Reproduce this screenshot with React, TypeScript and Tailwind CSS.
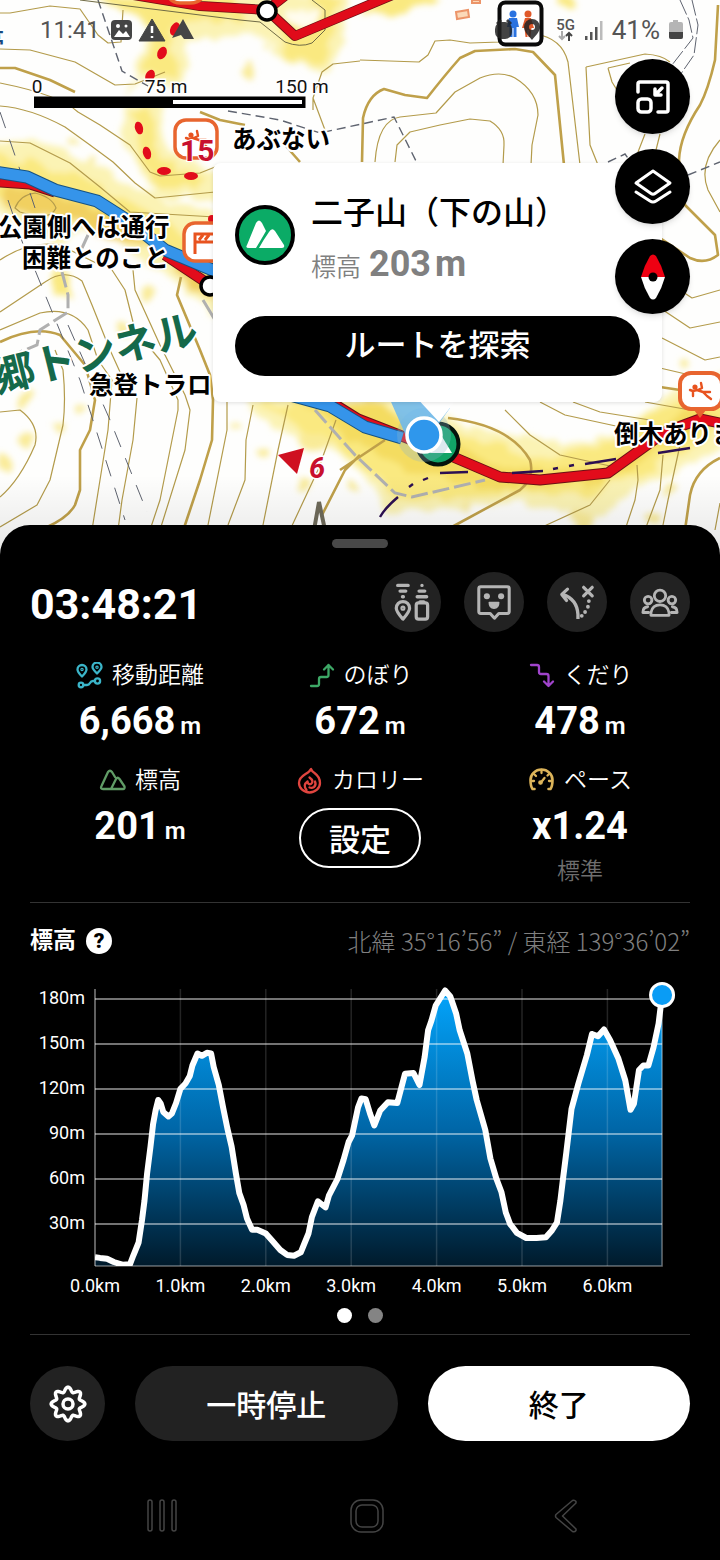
import React from 'react';

type Point = [number, number];

// distance in km, altitude in m
const profile: Point[] = [
  [0, 7.3], [0.06, 6.7], [0.14, 6.2], [0.22, 4], [0.32, 2.2], [0.41, 2.5], [0.45, 8.5], [0.51, 17],
  [0.55, 32], [0.58, 45], [0.61, 63], [0.65, 81], [0.68, 96], [0.71, 105], [0.74, 112], [0.77, 109.5],
  [0.8, 104], [0.86, 101], [0.9, 103], [0.95, 110], [1, 119.5], [1.06, 123], [1.11, 128], [1.14, 135],
  [1.2, 143], [1.25, 141.5], [1.31, 143.5], [1.36, 143], [1.39, 134], [1.45, 122], [1.5, 107], [1.55, 93],
  [1.6, 81], [1.65, 63], [1.69, 50], [1.74, 42], [1.78, 33], [1.84, 25.5], [1.9, 25.5], [2, 23],
  [2.07, 18.5], [2.17, 12], [2.25, 8.7], [2.33, 8.2], [2.41, 10.5], [2.45, 16], [2.5, 23], [2.54, 34],
  [2.61, 44.5], [2.7, 40.5], [2.74, 48.5], [2.84, 59.5], [2.91, 72], [2.97, 84], [3.01, 88.5], [3.08, 107],
  [3.12, 113], [3.17, 112.5], [3.22, 103], [3.27, 95], [3.34, 105], [3.43, 110.5], [3.54, 110], [3.63, 129.5],
  [3.73, 130], [3.8, 122], [3.86, 140.5], [3.9, 158.5], [3.94, 165], [3.99, 175], [4.1, 185], [4.16, 181],
  [4.23, 169.5], [4.27, 158.5], [4.36, 143], [4.42, 125], [4.47, 112], [4.57, 92], [4.63, 73], [4.7, 59.5],
  [4.76, 50.5], [4.81, 37], [4.86, 29.5], [4.94, 23.5], [5.05, 20], [5.17, 20], [5.28, 20.5], [5.35, 25],
  [5.41, 30.5], [5.45, 45], [5.48, 59.5], [5.52, 77.5], [5.58, 106], [5.66, 123], [5.76, 142], [5.82, 156],
  [5.89, 154.5], [5.96, 159], [6.03, 152], [6.13, 139.5], [6.21, 125], [6.27, 105.5], [6.31, 109.5], [6.37, 132],
  [6.42, 135], [6.48, 135], [6.54, 147], [6.6, 163], [6.64, 182],
];

const chartX = (km: number) => 65 + km * 85.4;
const chartY = (m: number) => 291 - m * 1.5;
const CHART_BOTTOM = 289;

const ElevationChart = () => {
  const line = profile.map(([km, m]) => `${chartX(km).toFixed(1)},${chartY(m).toFixed(1)}`).join(' ');
  const end = chartX(6.64);

  return (
    <svg viewBox="0 0 660 322" className="w-full mt-[18px] overflow-visible" role="img" aria-label="標高グラフ">
      <defs>
        <linearGradient id="area" x1="0" y1="14" x2="0" y2={CHART_BOTTOM} gradientUnits="userSpaceOnUse">
          <stop offset="0" stopColor="#03a4fb" />
          <stop offset="0.5" stopColor="#0067a8" />
          <stop offset="1" stopColor="#001a2b" />
        </linearGradient>
        <clipPath id="plot">
          <rect x="65" y="0" width="600" height={CHART_BOTTOM} />
        </clipPath>
      </defs>
      <polygon points={`65,${CHART_BOTTOM} ${line} ${end},${CHART_BOTTOM}`} fill="url(#area)" />
      {[30, 60, 90, 120, 150, 180].map((m) => (
        <g key={m}>
          <line x1="65" x2={end} y1={chartY(m) + 1} y2={chartY(m) + 1} stroke="#fff" strokeOpacity="0.45" strokeWidth="2" />
          <text x="55" y={chartY(m) + 6} textAnchor="end" fontSize="18" fill="#fff">{m}m</text>
        </g>
      ))}
      {[0, 1, 2, 3, 4, 5, 6].map((km) => (
        <g key={km}>
          <line x1={chartX(km)} x2={chartX(km)} y1="12" y2={CHART_BOTTOM} stroke="#fff" strokeOpacity={km === 0 ? 0.5 : 0.14} strokeWidth="1.5" />
          <text x={chartX(km)} y="315" textAnchor="middle" fontSize="18" fill="#fff">{km}.0km</text>
        </g>
      ))}
      <path d={`M65 ${CHART_BOTTOM}H${end}V17`} fill="none" stroke="#fff" strokeOpacity="0.4" strokeWidth="1.5" />
      <polyline points={line} clipPath="url(#plot)" fill="none" stroke="#fff" strokeWidth="6" strokeLinejoin="round" />
      <circle cx={end} cy="18" r="11.5" fill="#0a9cf5" stroke="#fff" strokeWidth="3" />
    </svg>
  );
};

const mapText = {
  fontFamily: '"Noto Sans CJK JP", sans-serif',
  fontWeight: 700,
  paintOrder: 'stroke',
  stroke: '#fff',
  strokeWidth: 4,
  strokeLinejoin: 'round' as const,
};

const SlipIcon = () => (
  <g stroke="#e8531f" strokeWidth="2.4" strokeLinecap="round" strokeLinejoin="round" fill="none">
    <circle cx="-5" cy="-4" r="1.4" fill="#e8531f" />
    <path d="M-10 -1L-7 0L-3 -1L3 1L10 1M-7 0L-7 5M-2 -1L2 -3L1 -8M3 1L7 5L11 8" />
  </g>
);

const MapCanvas = () => (
  <svg viewBox="0 0 720 560" preserveAspectRatio="xMidYMin slice" className="absolute inset-0 w-full h-full">
    <defs>
      <filter id="heat" x="-5%" y="-5%" width="110%" height="110%">
        <feTurbulence type="fractalNoise" baseFrequency="0.045" numOctaves="3" seed="4" />
        <feDisplacementMap in="SourceGraphic" scale="20" xChannelSelector="R" yChannelSelector="G" />
        <feOffset dx="3" dy="3" />
        <feGaussianBlur stdDeviation="3" />
      </filter>
      <linearGradient id="fade" x1="0" y1="0" x2="0" y2="1">
        <stop offset="0" stopColor="#000" stopOpacity="0" />
        <stop offset="1" stopColor="#000" stopOpacity="0.1" />
      </linearGradient>
    </defs>
    <rect width="720" height="560" fill="#fefefd" />

    {/* footprint heat */}
    <g filter="url(#heat)">
      <g fill="#fbf3b4">
        <path d="M75 -10H345V25L325 70L285 62L250 30L185 38L178 85L135 78L120 95L140 50L150 15Z" />
        <path d="M120 100L155 100L165 145L205 165L235 185L220 200L150 192L118 130Z" />
        <path d="M-10 140L45 140L100 170L145 190L215 215V320L185 290L140 255L95 225L50 240L-10 205Z" />
        <path d="M245 395H400L470 425L560 440L625 428L660 395L725 370V445L640 480L600 515L520 500L440 508L390 508L340 450L275 430Z" />
      </g>
      <g fill="#fae980">
        <path d="M80 -10H225L240 18L175 20L165 50L178 72L140 72L150 25Z" />
        <path d="M275 18L310 22V-10H340L322 60H285Z" />
        <path d="M125 108L148 108L155 155L200 175L200 188L150 184Z" />
        <path d="M-10 150L60 165L130 200L215 245V300L150 245L95 215L40 210L-10 195Z" />
        <path d="M255 400H350L395 425L470 432L530 455L610 438L660 402L720 388V425L650 468L590 490L520 490L440 498L400 498L340 445Z" />
        <path d="M50 272L66 272L68 298L52 292Z" />
        <path d="M385 -10L440 -10L420 2L360 14L365 4Z" />
        <circle cx="562" cy="-2" r="8" />
      </g>
      <path d="M300 400H380L420 430L500 465L600 465L690 405L720 410L650 450L610 480L500 488L400 465L340 430Z" fill="#f4dc60" />
      <path d="M0 185L60 195L110 210L150 245L110 235L60 215L0 200ZM170 262L213 272V300L185 285Z" fill="#f1d060" />
      <ellipse cx="302" cy="14" rx="16" ry="10" fill="#fffdf0" />
      <g fill="#f9eb98">
        <circle cx="88" cy="158" r="6" /><circle cx="68" cy="140" r="5" /><circle cx="248" cy="68" r="8" />
        <circle cx="55" cy="425" r="5" /><circle cx="24" cy="440" r="6" /><circle cx="3" cy="460" r="7" />
        <circle cx="80" cy="405" r="5" /><circle cx="233" cy="425" r="5" /><circle cx="262" cy="451" r="5" />
        <circle cx="300" cy="482" r="7" /><circle cx="310" cy="440" r="12" /><circle cx="145" cy="292" r="7" />
        <circle cx="120" cy="328" r="6" /><circle cx="20" cy="395" r="6" /><circle cx="350" cy="485" r="6" />
        <circle cx="465" cy="505" r="5" /><circle cx="650" cy="517" r="8" /><circle cx="580" cy="517" r="9" />
        <circle cx="678" cy="362" r="5" /><circle cx="665" cy="485" r="5" />
      </g>
    </g>

    {/* contour lines */}
    <g fill="none" stroke="#b39b4b" strokeWidth="1.2" strokeLinejoin="round">
      <path d="M0 13H10L50 6L80 9L98 35L108 43L121 42L123 10" />
      <path d="M0 49L30 50L75 62L115 85L135 84L165 72" />
      <path d="M0 83Q60 95 78 112L100 125L130 145L150 172L160 176L200 173L215 167" />
      <path d="M0 106Q30 108 65 127L90 145L113 162L135 183L155 198L215 192" />
      <path d="M0 141L30 143L70 163L100 187L130 212L215 217" />
      <path d="M15 208Q20 195 35 193Q52 197 56 208Q50 222 20 212Z" />
      <path d="M0 260Q30 240 60 245L100 265" />
      <path d="M360 60L419 62L428 55L435 41L450 40L470 43L500 42L535 34Q562 38 568 62L580 165" />
      <path d="M375 162Q378 120 400 117L436 113L455 92L480 78Q500 70 515 78Q538 92 538 115L532 145L531 165" />
      <path d="M395 162L397 145L410 132L440 125L470 119L490 121Q505 130 504 145L503 165" />
      <path d="M586 67L645 54Q662 55 670 62M586 67L590 145L598 165M608 68L630 63M608 68L612 82L620 95" />
      <path d="M313 110V98L322 72L333 64L360 61M313 98L325 130" />
      <path d="M645 134L638 152M660 134L656 150M720 140Q698 165 708 190L720 212" />
      <path d="M0 312L45 282Q65 268 82 281L92 305L110 350L120 372" />
      <path d="M0 330L40 313Q72 306 88 330L98 360L112 380L108 430L100 480L92 530" />
      <path d="M0 412L20 410Q40 425 35 445Q20 480 0 497" />
      <path d="M55 350L63 370Q66 400 63 425L50 480L37 505L0 527" />
      <path d="M112 270L125 290L135 330L160 360L178 400V410L160 500L150 530" />
      <path d="M133 270L135 290L160 345L185 395L190 410L185 450L160 530" />
      <path d="M137 398L133 440L122 500L118 530M227 402V430L207 530M253 405L246 440L245 480L228 525" />
      <path d="M288 405L278 450L262 530M336 420L318 470L290 530" />
      <path d="M505 410L530 435L560 455L610 466M540 402L565 415L625 428M573 402L600 412L650 420M645 402L690 410" />
      <path d="M610 480L590 505L540 528M637 465L638 480L635 500L625 530M663 455L660 490L645 530M680 445L668 500L662 530M720 503L715 530" />
      <path d="M662 338L705 360L720 357M660 308L690 328L720 322M680 290L692 298L720 290M660 368L690 375" />
    </g>
    <g fill="none" stroke="#bfa04a" strokeWidth="2.6" strokeLinejoin="round">
      <path d="M0 68H15L50 80L75 92M200 112L220 120L245 125M285 145L300 162" />
      <path d="M362 162L363 118Q368 95 384 89L405 95L427 98Q445 75 460 58L475 51L515 49L533 52L555 75L564 165" />
      <path d="M718 5L715 60Q708 90 700 105Q680 135 679 160L685 205L715 235L718 255Q705 265 690 258L660 238" />
      <path d="M0 342Q35 325 60 335L85 365L95 400L90 430L80 450V490L75 505Q68 518 45 528" />
      <path d="M181 277L177 295L200 350L210 375L213 400L212 440L200 480L184 528" />
      <path d="M360 455L345 470L322 515M450 528L520 490Q535 478 530 460Q510 425 448 418M340 470L385 440" />
      <path d="M720 458Q695 470 690 495L685 530M660 387L680 390" />
    </g>

    {/* minor paths and boundaries */}
    <g fill="none" stroke="#5f6470" strokeWidth="1.4">
      <path d="M98 0L122 71L148 86M228 111L280 120L320 133L394 117L418 165M608 162L625 154L632 164M688 175L720 162" strokeDasharray="9 5" />
      <path d="M0 112L20 170M8 200L25 250M30 193L35 208M35 270L80 380L125 520M68 325L110 420L147 512" strokeWidth="1" strokeDasharray="17 12" />
      <path d="M680 0L689 20L693 38L672 65M692 0L698 25L694 55L678 78" strokeWidth="1" strokeDasharray="16 3" />
    </g>
    <g fill="none" stroke="#b0b0b0" strokeWidth="3">
      <path d="M62 272L68 295V312L40 330L37 345L20 352" strokeDasharray="16 5" />
      <path d="M315 410L355 455L395 493L412 497L485 480" strokeDasharray="17 5" />
      <path d="M88 235L82 248M203 300L215 320" />
    </g>
    <path d="M80 0L240 20L260 22L285 42Q300 48 312 43L325 30V10L312 0" fill="none" stroke="#6f6a45" strokeWidth="1" />

    {/* trails */}
    <g fill="none" strokeLinejoin="round">
      <path d="M115 -8L200 6L267 10L295 36L395 -6M267 10L290 -8" stroke="#6b1015" strokeWidth="10" />
      <path d="M115 -8L200 6L267 10L295 36L395 -6M267 10L290 -8" stroke="#e00b1a" strokeWidth="8.5" />
      <path d="M0 182L30 184L55 192M165 255L210 285M318 394L358 419L430 447L500 477L540 480L608 473L665 432L700 419L725 424" stroke="#6b1015" strokeWidth="11" />
      <path d="M0 182L30 184L55 192M165 255L210 285M318 394L358 419L430 447L500 477L540 480L608 473L665 432L700 419L725 424" stroke="#e20c1b" strokeWidth="9" />
      <path d="M-5 172L27 177L55 190L97 201L130 222L165 250L215 271M290 395L330 406L365 427L402 438" stroke="#155283" strokeWidth="13" />
      <path d="M-5 172L27 177L55 190L97 201L130 222L165 250L215 271M290 395L330 406L365 427L402 438" stroke="#3594ea" strokeWidth="11" />
    </g>
    <g fill="#e20c1b">
      <ellipse cx="175" cy="29" rx="4.5" ry="7" transform="rotate(25 175 29)" />
      <ellipse cx="162" cy="53" rx="4.5" ry="6.5" transform="rotate(25 162 53)" />
      <ellipse cx="150" cy="76" rx="4.5" ry="6.5" transform="rotate(25 150 76)" />
      <ellipse cx="139" cy="128" rx="4" ry="6.5" transform="rotate(-15 139 128)" />
      <ellipse cx="147" cy="153" rx="4" ry="6.5" transform="rotate(-15 147 153)" />
      <ellipse cx="164" cy="171" rx="7" ry="4" />
      <ellipse cx="191" cy="176" rx="7" ry="4" />
      <circle cx="212" cy="219" r="4" />
    </g>
    <circle cx="267" cy="11" r="9" fill="#fff" stroke="#000" strokeWidth="3.5" />
    <circle cx="210" cy="286" r="9" fill="#fff" stroke="#000" strokeWidth="3.5" />
    <g fill="none" stroke="#2c0f52" strokeWidth="2.4">
      <path d="M380 517Q385 508 398 497M440 473L468 472M512 473L543 471M585 464L616 459M658 453L690 448" />
      <path d="M409 487L413 484M423 480L428 478M553 469L558 468M569 466L574 465" />
    </g>
    <g fill="none" stroke="#ec9468" strokeWidth="2">
      <path d="M456 12L468 10L469 17L457 19ZM472 0L480 0V3H472Z" fill="#fbd9b8" />
    </g>

    {/* report pins */}
    <g transform="translate(196 139)">
      <rect x="-21" y="-19" width="42" height="38" rx="11" fill="#fff" stroke="#e8652f" strokeWidth="3.5" />
      <SlipIcon />
    </g>
    <g transform="translate(205 242)">
      <rect x="-21" y="-19" width="42" height="38" rx="11" fill="#fff" stroke="#e8652f" strokeWidth="3.5" />
      <path d="M-10 12V-8H12M-10 0H12M-6 -2L-2 -7M0 -2L4 -7" fill="none" stroke="#e8531f" strokeWidth="3" />
    </g>
    <g transform="translate(700 391)">
      <path d="M-6 19L0 27L6 19Z" fill="#e8652f" />
      <rect x="-20" y="-18" width="42" height="36" rx="11" fill="#fff" stroke="#e8652f" strokeWidth="4" />
      <SlipIcon />
    </g>
    <path d="M168 -4Q172 3 180 3H190Q200 3 203 -4" fill="#fff" stroke="#e8652f" strokeWidth="3.5" />
    <g>
      <rect x="499.5" y="2.5" width="42" height="42" rx="6" fill="#fff" stroke="#0a0a0a" strokeWidth="4" />
      <g fill="#2a72e0"><circle cx="513" cy="14" r="3.5" /><path d="M509 18H517L519 27H516.5V37H513.5V28H512.5V37H509.5V27H507Z" /></g>
      <g fill="#e0592a"><circle cx="528" cy="14" r="3.5" /><path d="M525 18H531L534 28H531.5L530.5 37H528.5V30H527.5V37H525.5L524.5 28H522Z" /></g>
    </g>
    <path d="M278 455L304 448L297 474Z" fill="#cf1020" />
    <path d="M314 530L319 502L325 530" fill="none" stroke="#6e6a5a" strokeWidth="4" />

    {/* labels */}
    <g {...mapText} fontSize="24.5" fill="#000">
      <text x="232" y="148">あぶない</text>
      <text x="-2" y="236">公園側へは通行</text>
      <text x="22" y="267">困難とのこと</text>
      <text x="89" y="394">急登トラロ</text>
      <text x="614" y="443">倒木ありま</text>
    </g>
    <text {...mapText} x="-18" y="48" fontSize="22" fill="#17497f">亭</text>
    <text {...mapText} fontSize="42" fill="#15694a" transform="translate(-3 393) rotate(-14)">郷トンネル</text>
    <text x="180" y="161" fontSize="30" fontWeight="700" fill="#c8102e" stroke="#fff" strokeWidth="2" paintOrder="stroke">15</text>
    <text x="309" y="478" fontSize="29" fontWeight="700" fontStyle="italic" fill="#c8102e" stroke="#fff" strokeWidth="3" paintOrder="stroke">6</text>

    {/* summit pin and current position */}
    <circle cx="438" cy="444" r="20.5" fill="#11a467" stroke="#04130c" strokeWidth="4" />
    <path d="M430 453L441 435L452 453Z" fill="#fff" />
    <circle cx="424" cy="435" r="27" fill="#8fb7c9" fillOpacity="0.3" />
    <path d="M388 395L406 436H430L450 408L440 395Z" fill="#6ab7f0" fillOpacity="0.85" />
    <path d="M414 395L439 422L460 395Z" fill="#fff" />
    <circle cx="424" cy="435" r="17" fill="#2f97ec" stroke="#fff" strokeWidth="3.5" />
    <rect y="475" width="720" height="85" fill="url(#fade)" />

    {/* scale */}
    <rect x="34" y="96.5" width="271.5" height="11.5" fill="#000" />
    <rect x="173" y="100" width="129" height="4" fill="#fff" />
    <g fontSize="19" fill="#111" stroke="#fff" strokeWidth="3" paintOrder="stroke" textAnchor="middle">
      <text x="37" y="93">0</text>
      <text x="166" y="93">75 m</text>
      <text x="302" y="93">150 m</text>
    </g>
  </svg>
);

const StatusBar = () => (
  <header className="absolute inset-x-0 top-0 flex items-center justify-between pl-10 pr-9 h-15 text-[#555]">
    <div className="flex items-center gap-2">
      <span className="text-2xl leading-none">11:41</span>
      <svg width="86" height="24" viewBox="0 0 86 24" fill="#454545">
        <rect x="3" y="2" width="21" height="20" rx="4" />
        <path d="M6 19L11 12L15 16L18 13L22 19Z" fill="#fff" />
        <circle cx="10" cy="8" r="2" fill="#fff" />
        <circle cx="18" cy="8" r="1.5" fill="#fff" />
        <path d="M44 1L57 23H31Z" stroke="#454545" strokeLinejoin="round" />
        <path d="M44 8V15M44 18V20" stroke="#fff" strokeWidth="2.5" />
        <path d="M75 1L86 21H76L73 17L64 20Z" />
      </svg>
    </div>
    <div className="flex items-center gap-2">
      <svg width="46" height="24" viewBox="0 0 46 24" fill="#222" fillOpacity="0.85">
        <path d="M2 5L6 1L8 3L4 7ZM12 3L14 1L18 5L16 7Z" />
        <rect x="1" y="4" width="17" height="17" rx="7" />
        <path d="M38 1a8 8 0 0 1 8 8c0 5-5 9-8 13c-3-4-8-8-8-13a8 8 0 0 1 8-8Zm0 5a3 3 0 1 0 0 6a3 3 0 0 0 0-6Z" />
      </svg>
      <div className="flex flex-col items-center w-5 ml-2">
        <span className="text-[15px] leading-3 font-medium">5G</span>
        <svg width="18" height="10" viewBox="0 0 18 10" fill="none" strokeWidth="2">
          <path d="M5 0V8M2 5L5 8L8 5" stroke="#aaa" />
          <path d="M12 10V2M9 5L12 2L15 5" stroke="#444" />
        </svg>
      </div>
      <svg width="20" height="22" viewBox="0 0 20 22" fill="#555">
        <rect x="1" y="17" width="2.5" height="4" />
        <rect x="6" y="13" width="2.5" height="8" />
        <rect x="11" y="8" width="2.5" height="13" />
        <rect x="16" y="2" width="2.5" height="19" fill="#bbb" />
      </svg>
      <span className="text-[26px] leading-none">41%</span>
      <svg width="16" height="20" viewBox="0 0 16 20">
        <path d="M5 0H10V2H13Q15 2 15 4V17Q15 19 13 19H3Q1 19 1 17V4Q1 2 3 2H5Z" fill="#b5b5b5" />
        <path d="M1 12H15V17Q15 19 13 19H3Q1 19 1 17Z" fill="#444" />
      </svg>
    </div>
  </header>
);

const SummitIcon = () => (
  <svg width="60" height="60" viewBox="0 0 60 60" className="shrink-0">
    <circle cx="30" cy="30" r="28" fill="#0bab66" stroke="#000" strokeWidth="4" />
    <path
      d="M12 40L21 18Q24 13 27 18L31 26Q27 33 21 43H14Q10 43 12 40ZM24 43Q29 34 34 27Q37 22 40 26L49 40Q50 43 47 43Z"
      fill="#fff"
    />
  </svg>
);

const SummitCard = () => (
  <section className="absolute left-[213px] right-[58px] top-[163px] rounded-lg bg-white px-[22px] pt-6 pb-[26px] shadow-[0_1px_4px_rgba(0,0,0,0.12)]">
    <div className="flex items-start gap-4">
      <div className="pt-[18px]">
        <SummitIcon />
      </div>
      <div>
        <h2 className="text-[32px] leading-[52px] font-medium whitespace-nowrap">二子山（下の山）</h2>
        <p className="flex items-baseline gap-2 leading-[50px] text-[#808080]">
          <span className="text-[25px] font-[350]">標高</span>
          <span className="text-[36px] font-bold">
            203<span className="ml-1">m</span>
          </span>
        </p>
      </div>
    </div>
    <button className="mt-[23px] h-15 w-full rounded-full bg-black text-[31px] font-medium text-white">ルートを探索</button>
  </section>
);

const MapButton = ({ label, children }: { label: string; children: React.ReactNode }) => (
  <button aria-label={label} className="flex size-[75px] items-center justify-center rounded-full bg-black text-white shadow-md">
    {children}
  </button>
);

const MapControls = () => (
  <div className="absolute right-[30px] top-[59px] flex flex-col gap-[15px]">
    <MapButton label="縮小表示">
      <svg width="36" height="36" viewBox="0 0 36 36" fill="none" stroke="currentColor" strokeWidth="3.5" strokeLinecap="round" strokeLinejoin="round">
        <path d="M3 13V5Q3 3 5 3H31Q33 3 33 5V31Q33 33 31 33H23" />
        <rect x="3" y="20" width="13" height="13" rx="3.5" />
        <path d="M20 10V16H26M20.5 15.5L27 9" />
      </svg>
    </MapButton>
    <MapButton label="レイヤー">
      <svg width="40" height="38" viewBox="0 0 40 38" fill="none" stroke="currentColor" strokeWidth="3" strokeLinecap="round" strokeLinejoin="round">
        <path d="M20 3L37 15L22 25.5Q20 27 18 25.5L3 15Z" />
        <path d="M3 24L17 33Q20 35 23 33L37 24" />
      </svg>
    </MapButton>
    <MapButton label="コンパス">
      <svg width="30" height="46" viewBox="0 0 30 46">
        <path d="M12 2Q15 -1 18 2Q24 12 27 23H3Q6 12 12 2Z" fill="#ee0012" />
        <path d="M3 23H27Q24 34 18 44Q15 47 12 44Q6 34 3 23Z" fill="#fff" />
        <circle cx="15" cy="23" r="4.5" fill="#000" />
      </svg>
    </MapButton>
  </div>
);

const RoundButton = ({ label, children }: { label: string; children: React.ReactNode }) => (
  <button aria-label={label} className="flex size-15 items-center justify-center rounded-full bg-[#222] text-[#b5b5b5]">
    <svg width="38" height="38" viewBox="0 0 40 40" fill="none" stroke="currentColor" strokeWidth="3.5" strokeLinecap="round" strokeLinejoin="round">
      {children}
    </svg>
  </button>
);

const QuickActions = () => (
  <div className="flex gap-[23px]">
    <RoundButton label="ルートと装備">
      <path d="M6 2.5H17M8.5 8.5H14.5M11 14.5H12M31.5 2.5H31.6M28.5 8.5H34.5M26.5 14.5H36.5" />
      <path d="M11.5 38Q4.5 30 4.5 26.5A7 7 0 0 1 18.5 26.5Q18.5 30 11.5 38Z" strokeWidth="3.4" />
      <circle cx="11.5" cy="26.5" r="1.6" strokeWidth="2.2" />
      <rect x="25.5" y="21" width="12" height="17" rx="2.5" strokeWidth="3.4" />
      <path d="M29.5 20H33.5" />
    </RoundButton>
    <RoundButton label="モーメント">
      <path d="M6 4H34Q36 4 36 6V30Q36 32 34 32H25L20.5 37L16 32H6Q4 32 4 30V6Q4 4 6 4Z" strokeWidth="3.2" />
      <circle cx="12.5" cy="14" r="3.2" fill="currentColor" stroke="none" />
      <circle cx="27.5" cy="14" r="3.2" fill="currentColor" stroke="none" />
      <path d="M15 20.5H25Q25 26.5 20 26.5Q15 26.5 15 20.5Z" fill="currentColor" strokeWidth="1.5" />
    </RoundButton>
    <RoundButton label="ルート変更">
      <path d="M21 38V33Q20 17 5 12" strokeLinecap="butt" />
      <path d="M10 6.5L4 12L9 18.5M27 4.5L36 13.5M36 4.5L27 13.5" strokeWidth="3.4" />
      <path d="M32.5 19V19M31.5 25V25M28.5 30.5V30.5M25 34.5V34.5" strokeWidth="4" />
    </RoundButton>
    <RoundButton label="メンバー">
      <g strokeWidth="3">
        <circle cx="20" cy="13.5" r="6" />
        <path d="M10.5 34V31Q12 23 20 23Q28 23 29.5 31V34Z" />
        <circle cx="7.5" cy="18" r="4" />
        <circle cx="32.5" cy="18" r="4" />
        <path d="M8 31H2Q2 25.5 7 25M32 31H38Q38 25.5 33 25" />
      </g>
    </RoundButton>
  </div>
);

const iconProps = {
  width: 27,
  height: 27,
  viewBox: '0 0 27 27',
  fill: 'none',
  strokeWidth: 2.3,
  strokeLinecap: 'round' as const,
  strokeLinejoin: 'round' as const,
};

const StatLabel = ({ icon, children }: { icon: React.ReactNode; children: React.ReactNode }) => (
  <dt className="flex h-9 items-center gap-[9px] text-[23px] font-[350]">
    {icon}
    <span className="pt-0.5 leading-9">{children}</span>
  </dt>
);

const StatValue = ({ value, unit }: { value: string; unit?: string }) => (
  <div className="flex h-12 items-baseline gap-[5px] text-[38px] leading-12 font-bold">
    {value}
    {unit && <span className="text-2xl font-semibold">{unit}</span>}
  </div>
);

const Stats = () => (
  <dl className="mt-[25px] grid grid-cols-3 gap-y-[17px]">
    <div className="flex flex-col items-center gap-1">
      <StatLabel
        icon={
          <svg {...iconProps} stroke="#3bb5c9">
            <path d="M6 14.5Q1.5 10 1.5 7.5A4.5 4.5 0 0 1 10.5 7.5Q10.5 10 6 14.5Z" />
            <path d="M21 11.5Q16.5 7 16.5 5A4.5 4.5 0 0 1 25.5 5Q25.5 7 21 11.5Z" />
            <circle cx="6" cy="7.5" r="0.6" />
            <circle cx="21" cy="5.3" r="0.6" />
            <circle cx="5" cy="23" r="2.3" />
            <circle cx="21.5" cy="19" r="2.6" />
            <path d="M7.5 23H11Q13 23 14 21Q15 19 17 19H19" />
          </svg>
        }
      >
        移動距離
      </StatLabel>
      <dd><StatValue value="6,668" unit="m" /></dd>
    </div>
    <div className="flex flex-col items-center gap-1">
      <StatLabel
        icon={
          <svg {...iconProps} stroke="#3da866">
            <path d="M3 24H9Q11 24 11 22V17Q11 15 13 15H18.5Q20.5 15 20.5 13V3M16 7.5L20.5 3L25 7.5" />
          </svg>
        }
      >
        のぼり
      </StatLabel>
      <dd><StatValue value="672" unit="m" /></dd>
    </div>
    <div className="flex flex-col items-center gap-1">
      <StatLabel
        icon={
          <svg {...iconProps} stroke="#a044cc">
            <path d="M3 3H9Q11 3 11 5V10Q11 12 13 12H18.5Q20.5 12 20.5 14V24M16 19.5L20.5 24L25 19.5" />
          </svg>
        }
      >
        くだり
      </StatLabel>
      <dd><StatValue value="478" unit="m" /></dd>
    </div>
    <div className="flex flex-col items-center gap-1">
      <StatLabel
        icon={
          <svg {...iconProps} stroke="#609c66">
            <path d="M12 22H4Q1 22 2.5 19L9 5Q11 2.5 13 5L16 10M12 22L17 12Q18.5 9.5 20.5 12L25.5 19.5Q26 22 24 22Z" />
          </svg>
        }
      >
        標高
      </StatLabel>
      <dd><StatValue value="201" unit="m" /></dd>
    </div>
    <div className="flex flex-col items-center gap-1">
      <StatLabel
        icon={
          <svg {...iconProps} stroke="#e0453f">
            <path d="M15 2Q14 4.5 9.5 7Q3 11 3 16A10.5 9.5 0 0 0 24 16Q24 10 18.5 6Q16 4.5 15 2Z" />
            <path d="M13.5 10.5Q18.5 14 15 17Q12 18 11.5 14.5Q6.5 18 10.5 23M19 14.5Q20.5 18 18 20Q16 21.5 13.5 20.5" />
          </svg>
        }
      >
        カロリー
      </StatLabel>
      <dd className="pt-1.5">
        <button className="h-15 w-[122px] rounded-full border-2 border-white pt-1 text-[31px] leading-none font-medium">設定</button>
      </dd>
    </div>
    <div className="flex flex-col items-center gap-1">
      <StatLabel
        icon={
          <svg {...iconProps} stroke="#dcb45a">
            <path d="M6.5 22H4.5Q2.5 19 2.5 13A11 10.5 0 0 1 24.5 13Q24.5 19 22.5 22H20.5" strokeWidth="2.6" />
            <path d="M3 14H6M21 14H24M6 7L8 9M21 7L19.5 8.5M13.5 3V6M12.5 16L16.5 11" />
            <circle cx="12.5" cy="15.5" r="1.2" />
          </svg>
        }
      >
        ペース
      </StatLabel>
      <dd className="flex flex-col items-center gap-1">
        <StatValue value="x1.24" />
        <span className="text-[23px] leading-9 font-[350] text-[#6e6e6e]">標準</span>
      </dd>
    </div>
  </dl>
);

// eight-lobed cog outline around (20, 20)
const cog = Array.from({ length: 96 }, (_, i) => {
  const a = (i / 96) * Math.PI * 2;
  const r = 14.6 + 2.3 * Math.cos(8 * a);
  return `${(20 + r * Math.cos(a)).toFixed(2)},${(20 + r * Math.sin(a)).toFixed(2)}`;
}).join(' ');

const NavBar = () => (
  <nav className="mt-[58px] flex items-center justify-between pl-[115px] pr-28 pb-7 text-[#444]">
    <button aria-label="履歴">
      <svg width="34" height="34" viewBox="0 0 34 34" fill="none" stroke="currentColor" strokeWidth="1.5">
        <rect x="3" y="1" width="4" height="31" rx="2" />
        <rect x="15" y="1" width="4" height="31" rx="2" />
        <rect x="27" y="1" width="4" height="31" rx="2" />
      </svg>
    </button>
    <button aria-label="ホーム">
      <svg width="34" height="34" viewBox="0 0 34 34" fill="none" stroke="currentColor" strokeWidth="1.5">
        <rect x="1" y="1" width="32" height="32" rx="10" />
        <rect x="6" y="6" width="22" height="22" rx="6" />
      </svg>
    </button>
    <button aria-label="戻る">
      <svg width="24" height="34" viewBox="0 0 24 34" fill="none" stroke="currentColor" strokeWidth="1.5" strokeLinejoin="round">
        <path d="M2 15.5L18.5 1.5Q20.5 0.5 22 2.5V4L8.5 17L22 30V31.5Q20.5 33.5 18.5 32.5L2 18.5Q1 17 2 15.5Z" />
      </svg>
    </button>
  </nav>
);

const App = () => {
  return (
    <main className="bg-black font-['Roboto','Noto_Sans_CJK_JP',sans-serif]" lang="ja">
      <div className="relative h-[560px] overflow-hidden">
        <MapCanvas />
        <StatusBar />
        <SummitCard />
        <MapControls />
      </div>

      <div className="relative -mt-[35px] rounded-t-[30px] bg-black px-[30px] pt-3.5 text-white">
        <div className="mx-auto h-[9px] w-14 rounded-full bg-[#484848]" />
        <div className="mt-6 flex items-center justify-between">
          <time className="pt-1 text-[43px] leading-14 font-bold">03:48:21</time>
          <QuickActions />
        </div>

        <Stats />

        <section className="mt-3 border-t border-[#333] pt-5">
          <div className="flex items-center justify-between leading-9">
            <div className="flex items-center gap-2.5">
              <h3 className="text-[23px] font-bold">標高</h3>
              <button aria-label="標高について" className="flex size-[26px] items-center justify-center rounded-full bg-white">
                <span className="text-[21px] leading-none font-black text-black">?</span>
              </button>
            </div>
            <p className="font-['Noto_Sans_CJK_JP',sans-serif] text-[24px] font-light text-[#808080]">
              北緯 35°16’56” / 東経 139°36’02”
            </p>
          </div>
          <ElevationChart />
          <div className="mt-[9px] flex justify-center gap-4">
            <span className="size-[15px] rounded-full bg-white" />
            <span className="size-[15px] rounded-full bg-[#848484]" />
          </div>
        </section>

        <div className="mt-[11px] flex gap-[30px] border-t border-[#333] pt-[31px]">
          <button aria-label="設定" className="flex size-[75px] shrink-0 items-center justify-center rounded-full bg-[#222]">
            <svg width="40" height="40" viewBox="0 0 40 40" fill="none" stroke="currentColor" strokeWidth="3.5" strokeLinejoin="round">
              <polygon points={cog} />
              <circle cx="20" cy="20" r="5" />
            </svg>
          </button>
          <button className="h-[75px] flex-1 rounded-full bg-[#222] pt-1 text-[30px] leading-none font-medium">一時停止</button>
          <button className="h-[75px] flex-1 rounded-full bg-white pt-1 text-[30px] leading-none font-medium text-black">終了</button>
        </div>

        <NavBar />
      </div>
    </main>
  );
};

export default App;
